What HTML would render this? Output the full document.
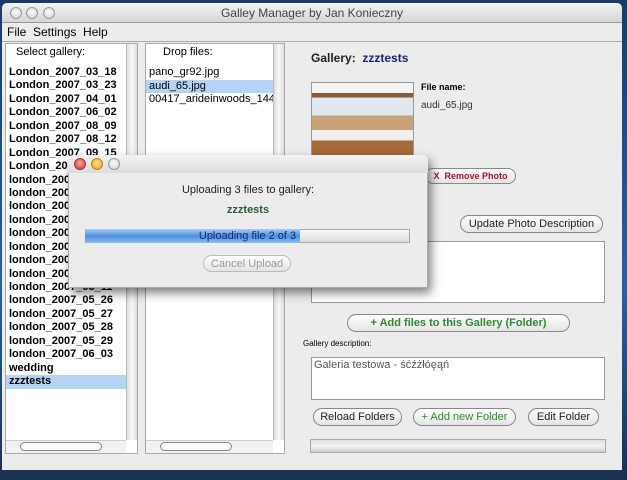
<!DOCTYPE html><html><head><style>
*{margin:0;padding:0;box-sizing:border-box}
body{width:627px;height:480px;overflow:hidden;background:linear-gradient(#1b3a66,#2f5f9c 60%,#1a3050);font-family:"Liberation Sans","DejaVu Sans",sans-serif;position:relative}
.a{position:absolute}
.win{left:2px;top:3px;width:620px;height:467px;background:#ececec;border-radius:5px 5px 0 0}
.tb{left:0;top:0;width:620px;height:20px;background:linear-gradient(#f4f4f4,#d6d6d6);border-radius:5px 5px 0 0;border-bottom:1px solid #999;font-size:12px;color:#444;text-align:center;line-height:20px}
.dot{width:12px;height:12px;border-radius:50%;border:1px solid #999;background:radial-gradient(circle at 50% 40%,#fff,#ccc)}
.menu{left:0;top:20px;width:620px;height:19px;font-size:12px;line-height:19px;padding-left:5px;border-bottom:1px solid #aaa;background:#ececec}
.list{background:#fff;border:1px solid #aaa}
.it{font-size:11px;font-weight:bold;height:13.45px;line-height:13px;padding-left:3px;white-space:nowrap;overflow:hidden}
.vs{background:linear-gradient(90deg,#ddd,#f8f8f8,#ddd);border-left:1px solid #bbb}
.btn{border:1px solid #888;border-radius:10px;background:linear-gradient(#fff,#e4e4e4);font-size:11px;text-align:center;line-height:16px;color:#222}
.ta{background:#fff;border:1px solid #999}
</style></head><body>
<div class="a win">
 <div class="a tb">Galley Manager by Jan Konieczny</div>
 <div class="a dot" style="left:8px;top:4px"></div><div class="a dot" style="left:24px;top:4px"></div><div class="a dot" style="left:41px;top:4px"></div>
 <div class="a menu">File&nbsp; Settings&nbsp; Help</div>
</div>
<div class="a list" style="left:5px;top:43px;width:133px;height:411px"></div>
<div class="a" style="left:16px;top:46px;font-size:11px">Select gallery:</div>
<div class="a" style="left:6px;top:66px;width:120px">
<div class="it">London_2007_03_18</div><div class="it">London_2007_03_23</div><div class="it">London_2007_04_01</div><div class="it">London_2007_06_02</div><div class="it">London_2007_08_09</div><div class="it">London_2007_08_12</div><div class="it">London_2007_09_15</div><div class="it">London_2007_10_01</div><div class="it">london_2007_04_02</div><div class="it">london_2007_04_10</div><div class="it">london_2007_04_20</div><div class="it">london_2007_04_28</div><div class="it">london_2007_05_01</div><div class="it">london_2007_05_03</div><div class="it">london_2007_05_06</div><div class="it">london_2007_05_09</div><div class="it">london_2007_05_11</div><div class="it">london_2007_05_26</div><div class="it">london_2007_05_27</div><div class="it">london_2007_05_28</div><div class="it">london_2007_05_29</div><div class="it">london_2007_06_03</div><div class="it">wedding</div><div class="it" style="background:#b5d3f3">zzztests</div>
</div>
<div class="a vs" style="left:126px;top:44px;width:11px;height:396px"></div>
<div class="a" style="left:6px;top:440px;width:120px;height:13px;background:#f2f2f2;border-top:1px solid #ccc"></div>
<div class="a" style="left:20px;top:442px;width:82px;height:9px;border:1px solid #888;border-radius:5px;background:#fafafa"></div>
<div class="a list" style="left:145px;top:43px;width:140px;height:411px"></div>
<div class="a" style="left:163px;top:46px;font-size:11px">Drop files:</div>
<div class="a" style="left:146px;top:66px;width:127px;font-size:11px">
<div style="height:13.5px;padding-left:3px">pano_gr92.jpg</div><div style="height:13.5px;padding-left:3px;background:#b5d3f3">audi_65.jpg</div><div style="height:13.5px;padding-left:3px;white-space:nowrap;overflow:hidden">00417_arideinwoods_1440</div>
</div>
<div class="a vs" style="left:273px;top:44px;width:11px;height:396px"></div>
<div class="a" style="left:146px;top:440px;width:127px;height:13px;background:#f2f2f2;border-top:1px solid #ccc"></div>
<div class="a" style="left:160px;top:442px;width:72px;height:9px;border:1px solid #888;border-radius:5px;background:#fafafa"></div>
<div class="a" style="left:311px;top:51px;font-size:12px;font-weight:bold;color:#222">Gallery: &nbsp;<span style="color:#1a237e">zzztests</span></div>
<div class="a" style="left:311px;top:82px;width:103px;height:74px;border:1px solid #999;background:linear-gradient(#f4f4f4 0 14%,#8a5a3a 14% 20%,#dfe8ee 20% 45%,#c9a27a 45% 65%,#eee 65% 80%,#a56a3a 80%)"></div>
<div class="a" style="left:421px;top:82px;font-size:9px;font-weight:bold">File name:</div>
<div class="a" style="left:421px;top:100px;font-size:10px;color:#333">audi_65.jpg</div>
<div class="a btn" style="left:425px;top:168px;width:91px;height:16px;color:#b0102a;font-weight:bold;font-size:9px;line-height:14px">X &nbsp;Remove Photo</div>
<div class="a btn" style="left:460px;top:215px;width:143px;height:18px">Update Photo Description</div>
<div class="a ta" style="left:311px;top:241px;width:294px;height:62px"></div>
<div class="a btn" style="left:347px;top:314px;width:223px;height:18px;color:#2e8b2e;font-weight:bold">+ Add files to this Gallery (Folder)</div>
<div class="a" style="left:303px;top:339px;font-size:8px">Gallery description:</div>
<div class="a ta" style="left:311px;top:357px;width:294px;height:43px;font-size:11px;color:#555;padding:1px 2px">Galeria testowa - śćźżłóęąń</div>
<div class="a btn" style="left:313px;top:408px;width:89px;height:18px">Reload Folders</div>
<div class="a btn" style="left:413px;top:408px;width:103px;height:18px;color:#2e8b2e">+ Add new Folder</div>
<div class="a btn" style="left:528px;top:408px;width:71px;height:18px">Edit Folder</div>
<div class="a" style="left:310px;top:439px;width:296px;height:14px;background:linear-gradient(#ddd,#f4f4f4,#ccc);border:1px solid #aaa"></div>
<div class="a" style="left:68px;top:155px;width:360px;height:133px;background:#ececec;border:1px solid #aaa;border-radius:5px 5px 0 0;box-shadow:3px 5px 10px rgba(0,0,0,.5)"></div>
<div class="a" style="left:68px;top:155px;width:360px;height:18px;background:linear-gradient(#f4f4f4,#dcdcdc);border-radius:5px 5px 0 0"></div>
<div class="a dot" style="left:74px;top:158px;background:radial-gradient(circle at 50% 40%,#f8a0a0,#d0343a);border-color:#a33"></div>
<div class="a dot" style="left:91px;top:158px;background:radial-gradient(circle at 50% 40%,#ffe08a,#e0a020);border-color:#b80"></div>
<div class="a dot" style="left:108px;top:158px"></div>
<div class="a" style="left:68px;top:184px;width:360px;text-align:center;font-size:11px;color:#222">Uploading 3 files to gallery:</div>
<div class="a" style="left:68px;top:204px;width:360px;text-align:center;font-size:11px;font-weight:bold;color:#2a5a3a">zzztests</div>
<div class="a" style="left:85px;top:229px;width:325px;height:14px;border:1px solid #aaa;background:linear-gradient(#f8f8f8,#ddd)"></div>
<div class="a" style="left:85px;top:229px;width:215px;height:14px;background:linear-gradient(#a8cdf5,#4b8fe0 50%,#8ec0f0)"></div>
<div class="a" style="left:85px;top:229px;width:325px;text-align:center;font-size:11px;line-height:14px;color:#0d2b6e">Uploading file 2 of 3</div>
<div class="a btn" style="left:203px;top:255px;width:88px;height:17px;color:#999;border-color:#bbb">Cancel Upload</div>
</body></html>
